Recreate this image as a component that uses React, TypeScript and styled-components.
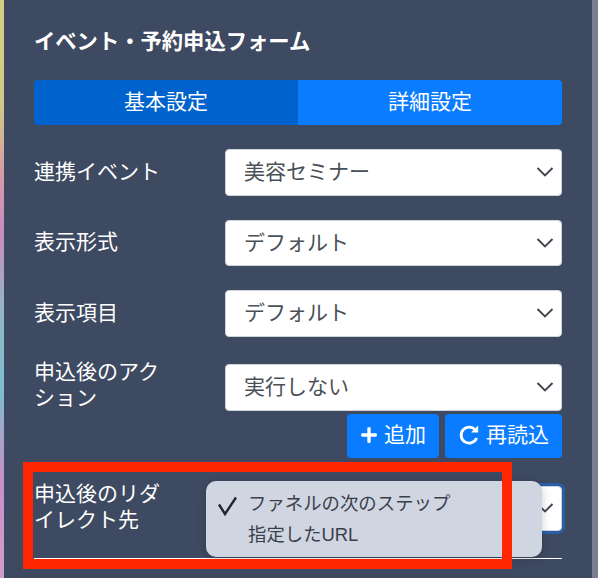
import React from "react";
import styled, {createGlobalStyle} from "styled-components";
import {FaPlus} from "react-icons/fa";

const GlobalStyle = createGlobalStyle`
    html, body {
        margin: 0;
        padding: 0;
        background: #3e4a61;
    }
    * {
        box-sizing: border-box;
    }
`

const fontStack = `"Liberation Sans", "Noto Sans CJK JP", sans-serif`

const Chevron = () => (
    <ChevronSvg viewBox="0 0 18 12" fill="none">
        <path d="M1.5 2 L9 9.5 L16.5 2" stroke="#3f4650" strokeWidth="1.9"/>
    </ChevronSvg>
)

const SelectBox = (props: { value: string, focused?: boolean }) => (
    <Select $focused={props.focused}>
        <SelectValue>{props.value}</SelectValue>
        <Chevron/>
    </Select>
)

export default function App() {
    return (
        <Page>
            <GlobalStyle/>
            <RainbowStrip/>
            <Panel>
                <Title>イベント・予約申込フォーム</Title>
                <Tabs>
                    <Tab $active>基本設定</Tab>
                    <Tab>詳細設定</Tab>
                </Tabs>
                <Row>
                    <Label>連携イベント</Label>
                    <SelectBox value="美容セミナー"/>
                </Row>
                <Row>
                    <Label>表示形式</Label>
                    <SelectBox value="デフォルト"/>
                </Row>
                <Row>
                    <Label>表示項目</Label>
                    <SelectBox value="デフォルト"/>
                </Row>
                <ActionRow>
                    <Label>申込後のアクション</Label>
                    <SelectBox value="実行しない"/>
                </ActionRow>
                <Buttons>
                    <ActionButton><FaPlus size={18}/>追加</ActionButton>
                    <ActionButton>
                        <svg width="22" height="22" viewBox="0 0 22 22" fill="none">
                            <path d="M17.5 6.2 A8 8 0 1 0 18.6 14" stroke="#fff" strokeWidth="2.8"/>
                            <path d="M13 8.6 H20.2 V1.4 Z" fill="#fff"/>
                        </svg>
                        再読込
                    </ActionButton>
                </Buttons>
                <RedirectRow>
                    <Label>申込後のリダイレクト先</Label>
                    <SelectBox value="" focused/>
                    <Menu>
                        <MenuItem>
                            <svg width="20" height="22" viewBox="0 0 20 22" fill="none">
                                <path d="M2 9.5 L8 19 L19 2.5" stroke="#1f2630" strokeWidth="2.4"/>
                            </svg>
                            <span>ファネルの次のステップ</span>
                        </MenuItem>
                        <MenuItem><span>指定したURL</span></MenuItem>
                    </Menu>
                </RedirectRow>
                <Divider/>
                <Highlight/>
            </Panel>
            <ScrollTrack/>
        </Page>
    )
}

const Page = styled.div`
    display: flex;
    width: 598px;
    height: 578px;
    overflow: hidden;
    font-family: ${fontStack};
    background: #3e4a61;
`

const RainbowStrip = styled.div`
    width: 4px;
    flex-shrink: 0;
    background: linear-gradient(180deg, #d3d184 0%, #cfcb88 18%, #d79aa8 30%, #c98cc0 40%, #8fb8c8 55%, #7fbccd 68%, #a0a8c8 74%, #c98fc8 84%, #cfa0cc 100%);
`

const Panel = styled.div`
    position: relative;
    flex: 1;
    padding: 28px 30px 0 30px;
    background: #3e4a61;
`

const ScrollTrack = styled.div`
    width: 6px;
    flex-shrink: 0;
    background: #787f90;
`

const Title = styled.h2`
    margin: 0 0 24px;
    font-size: 21.3px;
    line-height: 28px;
    font-weight: 700;
    color: #fff;
`

const Tabs = styled.div`
    display: flex;
    height: 45px;
    margin-bottom: 24px;
    border-radius: 4px;
    overflow: hidden;
`

const Tab = styled.div<{ $active?: boolean }>`
    flex: 1;
    display: flex;
    align-items: center;
    justify-content: center;
    padding-bottom: 5px;
    font-size: 21px;
    color: #fff;
    background: ${props => props.$active ? "#0062cc" : "#0a7cff"};
`

const Row = styled.div`
    display: flex;
    align-items: center;
    height: 46.5px;
    margin-bottom: 24px;
`

const ActionRow = styled(Row)`
    margin-top: 27.5px;
    margin-bottom: 3px;
`

const RedirectRow = styled(Row)`
    position: relative;
    height: 72.5px;
    margin: 27.5px 0 0;
    align-items: flex-start;
`

const Label = styled.div`
    width: 191px;
    flex-shrink: 0;
    padding-right: 50px;
    padding-bottom: 1px;
    font-size: 21px;
    line-height: 26px;
    color: #fff;

    ${ActionRow} & {
        padding-bottom: 4px;
    }

    ${RedirectRow} & {
        margin-top: -5px;
    }
`

const Select = styled.div<{ $focused?: boolean }>`
    flex: 1;
    height: ${props => props.$focused ? "45px" : "100%"};
    display: flex;
    align-items: center;
    justify-content: space-between;
    padding: 0 7px 0 18px;
    font-size: 21px;
    color: #4a5057;
    background: #fff;
    border: 1px solid #ced4da;
    border-radius: 4px;
    box-shadow: ${props => props.$focused ? "0 0 0 3px #2a5fa8" : "none"};
`

const SelectValue = styled.span`
    margin-bottom: 4px;
`

const ChevronSvg = styled.svg`
    width: 18px;
    height: 12px;
`

const Buttons = styled.div`
    display: flex;
    justify-content: flex-end;
    gap: 6px;
`

const ActionButton = styled.div`
    height: 44.5px;
    display: flex;
    align-items: center;
    gap: 6px;
    padding: 0 13px 5px;
    font-size: 21px;
    color: #fff;
    background: #0a7cff;
    border-radius: 4px;

    svg {
        margin-top: 4px;
    }
`

const Menu = styled.div`
    position: absolute;
    left: 172px;
    top: -4.7px;
    width: 336px;
    height: 76px;
    padding: 6px 0 0 11px;
    border-radius: 10px;
    background: #cfd6e2;
    box-shadow: 0 2px 10px rgba(0, 0, 0, 0.2);
`

const MenuItem = styled.div`
    display: flex;
    align-items: center;
    height: 31px;
    padding-left: 31px;
    position: relative;
    font-size: 18.4px;
    color: #3a4049;

    svg {
        position: absolute;
        left: 0;
        top: 8px;
    }
`

const Divider = styled.div`
    height: 1px;
    background: #fff;
`

const Highlight = styled.div`
    position: absolute;
    left: 19px;
    top: 462px;
    width: 489px;
    height: 107px;
    border: 10px solid #ff2600;
`
